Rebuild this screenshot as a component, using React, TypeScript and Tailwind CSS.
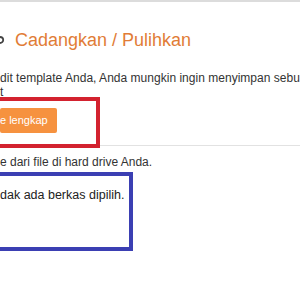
export default function App() {
  return (
    <div className="w-[300px] h-[300px] overflow-hidden bg-white font-['Liberation_Sans',Arial,sans-serif]">
      <div className="h-[2px] bg-[#dcdcdc]" />

      <div className="mt-[29px] flex items-center">
        <svg width="5" height="8" viewBox="0 0 5 8" className="shrink-0">
          <path d="M0 1 A3.2 3 0 0 1 0 7" fill="none" stroke="#444" strokeWidth="1.8" />
        </svg>
        <h1 className="ml-[10px] text-[18px] leading-none text-[#e17c36]">
          Cadangkan / Pulihkan
        </h1>
      </div>

      <p className="mt-[22px] whitespace-nowrap text-[12px] leading-[14px] text-[#333]">
        <span className="tracking-[0.02px]">dit template Anda, Anda mungkin ingin menyimpan sebu</span>
        <br />
        t
      </p>

      <div className="-mt-[2px] flex items-end">
        <div className="-ml-1 h-[51px] w-[104px] shrink-0 border-4 border-[#d3222f] pt-[7px]">
          <button className="flex h-[25px] items-center rounded-[2px] bg-[#f6923f] pr-[9px] text-[11px] text-white">
            e lengkap
          </button>
        </div>
        <div className="mb-[2px] h-px flex-1 bg-[#e2e2e2]" />
      </div>

      <p className="mt-[7px] whitespace-nowrap text-[12px] leading-[14px] text-[#333]">
        e dari file di hard drive Anda.
      </p>

      <div className="-ml-1 mt-[3px] h-[79px] w-[137px] border-4 border-[#3b3fb3] pt-[6px]">
        <span className="whitespace-nowrap text-[12.5px] leading-[15px] text-[#222]">
          dak ada berkas dipilih.
        </span>
      </div>
    </div>
  );
}
